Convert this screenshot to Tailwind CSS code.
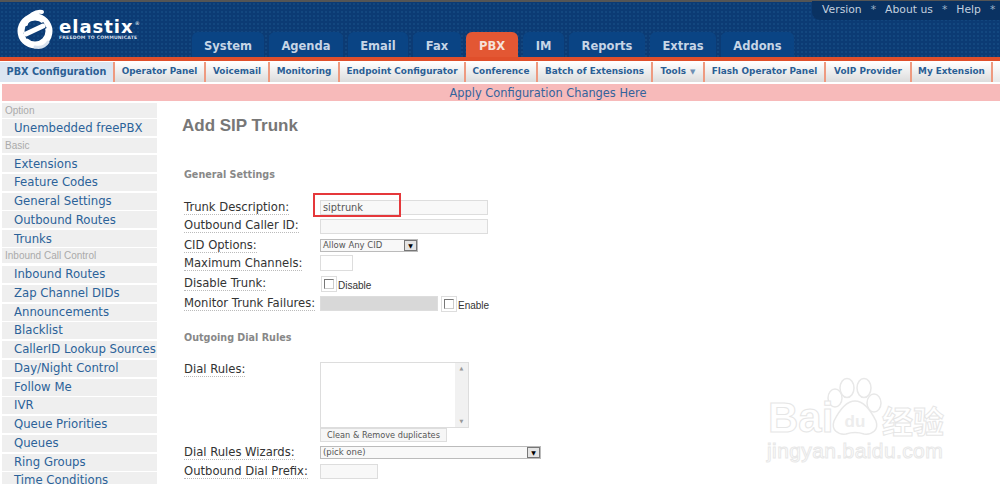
<!DOCTYPE html>
<html lang="en">
<head>
  <meta charset="UTF-8" />
  <title>Elastix - Add SIP Trunk</title>
  <script src="https://cdn.jsdelivr.net/npm/@tailwindcss/browser@4"></script>
</head>
<body class="relative h-[484px] overflow-hidden bg-white font-['DejaVu_Sans',sans-serif]">

  <!-- header -->
  <header class="relative h-[57px] border-t-2 border-[#555] bg-[#0c3b74] bg-[radial-gradient(#13477f_1px,transparent_1px)] bg-[length:4px_4px]">
    <div class="absolute left-[14px] top-[7px] flex">
      <svg width="42" height="42" viewBox="0 0 42 42" fill="none">
        <circle cx="21" cy="22" r="14" stroke="#fff" stroke-width="7"/>
        <path d="M11 27 L31 16" stroke="#0c3b74" stroke-width="7"/>
        <path d="M12 25 L29 17" stroke="#fff" stroke-width="5" stroke-linecap="round"/>
        <path d="M12 15 C14 6 22 2 28 3" stroke="#fff" stroke-width="4" stroke-linecap="round"/>
        <path d="M21 38 C26 39 31 38 34 33" stroke="#d8e2ee" stroke-width="3" stroke-linecap="round"/>
      </svg>
      <div class="ml-[3px] mt-[10px] text-white">
        <div class="flex h-[16px] items-start text-[18px] leading-[16px] font-bold tracking-[1px]">elastix<span class="ml-[1px] text-[5px] leading-[8px] font-normal">®</span></div>
        <div class="text-[4.6px] leading-[6px] font-bold tracking-[0.2px] whitespace-nowrap text-[#d5dfea]">FREEDOM TO COMMUNICATE</div>
      </div>
    </div>

    <div class="absolute -top-[1px] right-0 flex h-[19px] w-[188px] items-center rounded-bl-[8px] bg-[#0a3262] pl-[10px] text-[10.8px] text-[#c3d0df]">
      <span>Version</span><span class="mx-[9px] text-[#9fb2c8]">*</span>
      <span>About us</span><span class="mx-[9px] text-[#9fb2c8]">*</span>
      <span>Help</span><span class="ml-[9px] text-[#9fb2c8]">*</span>
    </div>

    <nav class="absolute bottom-0 left-[192px] flex h-[25px] gap-[5px] text-[11.5px] font-bold text-[#c6d5e6]">
      <a class="flex w-[72px] items-center justify-center rounded-t-[6px] bg-[#0a4484] pt-[4px]">System</a>
      <a class="flex w-[74px] items-center justify-center rounded-t-[6px] bg-[#0a4484] pt-[4px]">Agenda</a>
      <a class="flex w-[60px] items-center justify-center rounded-t-[6px] bg-[#0a4484] pt-[4px]">Email</a>
      <a class="flex w-[48px] items-center justify-center rounded-t-[6px] bg-[#0a4484] pt-[4px]">Fax</a>
      <a class="flex w-[52px] items-center justify-center rounded-t-[6px] bg-[#e35733] pt-[4px] text-[#f6e2da]">PBX</a>
      <a class="flex w-[41px] items-center justify-center rounded-t-[6px] bg-[#0a4484] pt-[4px]">IM</a>
      <a class="flex w-[76px] items-center justify-center rounded-t-[6px] bg-[#0a4484] pt-[4px]">Reports</a>
      <a class="flex w-[66px] items-center justify-center rounded-t-[6px] bg-[#0a4484] pt-[4px]">Extras</a>
      <a class="flex w-[73px] items-center justify-center rounded-t-[6px] bg-[#0a4484] pt-[4px]">Addons</a>
    </nav>
  </header>
  <div class="h-[4px] bg-[#e04f2b]"></div>

  <!-- sub menu -->
  <nav class="mt-[1px] flex h-[20px] text-[8.9px] font-bold text-[#2b5f95]">
    <a class="flex w-[115px] items-center justify-center border-r-2 border-[#ee9a80] bg-[#dce6f2] text-[9.7px]">PBX Configuration</a>
    <a class="flex w-[91px] items-center justify-center border-r-2 border-[#ee9a80] bg-gradient-to-b from-white to-[#dcdcdc]">Operator Panel</a>
    <a class="flex w-[64px] items-center justify-center border-r-2 border-[#ee9a80] bg-gradient-to-b from-white to-[#dcdcdc]">Voicemail</a>
    <a class="flex w-[70px] items-center justify-center border-r-2 border-[#ee9a80] bg-gradient-to-b from-white to-[#dcdcdc]">Monitoring</a>
    <a class="flex w-[126px] items-center justify-center border-r-2 border-[#ee9a80] bg-gradient-to-b from-white to-[#dcdcdc]">Endpoint Configurator</a>
    <a class="flex w-[72px] items-center justify-center border-r-2 border-[#ee9a80] bg-gradient-to-b from-white to-[#dcdcdc]">Conference</a>
    <a class="flex w-[115px] items-center justify-center border-r-2 border-[#ee9a80] bg-gradient-to-b from-white to-[#dcdcdc]">Batch of Extensions</a>
    <a class="flex w-[52px] items-center justify-center gap-[4px] border-r-2 border-[#ee9a80] bg-gradient-to-b from-white to-[#dcdcdc]">Tools <span class="text-[7px] text-[#6f8fb3]">▼</span></a>
    <a class="flex w-[121px] items-center justify-center border-r-2 border-[#ee9a80] bg-gradient-to-b from-white to-[#dcdcdc]">Flash Operator Panel</a>
    <a class="flex w-[86px] items-center justify-center border-r-2 border-[#ee9a80] bg-gradient-to-b from-white to-[#dcdcdc]">VoIP Provider</a>
    <a class="flex w-[81px] items-center justify-center border-r-2 border-[#ee9a80] bg-gradient-to-b from-white to-[#dcdcdc]">My Extension</a>
    <a class="flex-1 bg-gradient-to-b from-white to-[#e8e8e8]"></a>
  </nav>

  <div class="mt-[2px] ml-[2px] flex h-[17px] items-center justify-center bg-[#f7baba] pt-[2px] pl-[94px] text-[11.4px] text-[#33639c]">Apply Configuration Changes Here</div>

  <div class="mt-[2px] flex">
    <!-- side menu -->
    <aside class="ml-[2px] w-[155px] shrink-0 text-[11.7px] text-[#2b6299]">
      <div class="mb-[1px] flex h-[15px] items-center bg-[#efefef] pl-[3px] font-['Liberation_Sans',sans-serif] text-[10px] text-[#aaa]">Option</div>
      <div class="mb-[2px] flex h-[17px] items-center bg-[#efefef] pt-[2px] pl-[12px]">Unembedded freePBX</div>
      <div class="mb-[2px] flex h-[15px] items-center bg-[#efefef] pl-[3px] font-['Liberation_Sans',sans-serif] text-[10px] text-[#aaa]">Basic</div>
      <div class="mb-[1.75px] flex h-[17px] items-center bg-[#efefef] pt-[2px] pl-[12px]">Extensions</div>
      <div class="mb-[1.75px] flex h-[17px] items-center bg-[#efefef] pt-[2px] pl-[12px]">Feature Codes</div>
      <div class="mb-[1.75px] flex h-[17px] items-center bg-[#efefef] pt-[2px] pl-[12px]">General Settings</div>
      <div class="mb-[1.75px] flex h-[17px] items-center bg-[#efefef] pt-[2px] pl-[12px]">Outbound Routes</div>
      <div class="mb-[1px] flex h-[17px] items-center bg-[#efefef] pt-[2px] pl-[12px]">Trunks</div>
      <div class="mb-[3px] flex h-[15px] items-center bg-[#efefef] pl-[3px] font-['Liberation_Sans',sans-serif] text-[10px] text-[#aaa]">Inbound Call Control</div>
      <div class="mb-[1.75px] flex h-[17px] items-center bg-[#efefef] pt-[1px] pl-[12px]">Inbound Routes</div>
      <div class="mb-[1.75px] flex h-[17px] items-center bg-[#efefef] pt-[1px] pl-[12px]">Zap Channel DIDs</div>
      <div class="mb-[1.75px] flex h-[17px] items-center bg-[#efefef] pt-[1px] pl-[12px]">Announcements</div>
      <div class="mb-[1.75px] flex h-[17px] items-center bg-[#efefef] pt-[1px] pl-[12px]">Blacklist</div>
      <div class="mb-[1.75px] flex h-[17px] items-center bg-[#efefef] pt-[1px] pl-[12px] whitespace-nowrap">CallerID Lookup Sources</div>
      <div class="mb-[1.75px] flex h-[17px] items-center bg-[#efefef] pt-[1px] pl-[12px]">Day/Night Control</div>
      <div class="mb-[1.75px] flex h-[17px] items-center bg-[#efefef] pt-[1px] pl-[12px]">Follow Me</div>
      <div class="mb-[1.75px] flex h-[17px] items-center bg-[#efefef] pt-[1px] pl-[12px]">IVR</div>
      <div class="mb-[1.75px] flex h-[17px] items-center bg-[#efefef] pt-[1px] pl-[12px]">Queue Priorities</div>
      <div class="mb-[1.75px] flex h-[17px] items-center bg-[#efefef] pt-[1px] pl-[12px]">Queues</div>
      <div class="mb-[1.75px] flex h-[17px] items-center bg-[#efefef] pt-[1px] pl-[12px]">Ring Groups</div>
      <div class="mb-[1.75px] flex h-[17px] items-center bg-[#efefef] pt-[1px] pl-[12px]">Time Conditions</div>
    </aside>

    <!-- form -->
    <main class="ml-[25px] flex-1 text-[11.6px] text-[#333]">
      <h2 class="mt-[12px] h-[20px] pt-[1px] font-['Liberation_Sans',sans-serif] text-[17px] leading-[20px] font-bold text-[#777]">Add SIP Trunk</h2>

      <div class="ml-[2px]">
        <h5 class="mt-[31px] h-[16px] pt-[1px] text-[9.6px] leading-[16px] font-bold text-[#888]">General Settings</h5>

        <div class="mt-[16px] flex h-[18px] items-center">
          <label class="w-[136px] pt-[1px]"><span class="border-b border-dotted border-[#bbb]">Trunk Description:</span></label>
          <input value="siptrunk" class="h-[15px] w-[168px] border border-[#ddd] bg-[#f8f8f8] pl-[2px] text-[9.8px] text-[#555]" />
        </div>
        <div class="mt-[1px] flex h-[18px] items-center">
          <label class="w-[136px]"><span class="border-b border-dotted border-[#bbb]">Outbound Caller ID:</span></label>
          <input class="h-[15px] w-[168px] border border-[#ddd] bg-[#f8f8f8]" />
        </div>
        <div class="mt-[1px] flex h-[19px] items-center">
          <label class="w-[136px]"><span class="border-b border-dotted border-[#bbb]">CID Options:</span></label>
          <div class="flex h-[13px] w-[98px] items-center justify-between border border-[#bbb] bg-[#f8f8f8] pl-[2px] text-[8.5px] text-[#555]">Allow Any CID<span class="flex h-[11px] w-[13px] items-center justify-center border border-[#777] bg-[#e4e4e4] text-[6px] text-black">▼</span></div>
        </div>
        <div class="flex h-[16px] items-center">
          <label class="w-[136px] pt-[1px]"><span class="border-b border-dotted border-[#bbb]">Maximum Channels:</span></label>
          <input class="h-[16px] w-[33px] border border-[#ddd] bg-white" />
        </div>
        <div class="mt-[3px] flex h-[19px] items-center">
          <label class="w-[136px]"><span class="border-b border-dotted border-[#bbb]">Disable Trunk:</span></label>
          <span class="ml-[1px] flex h-[16px] w-[16px] items-center justify-center border border-[#ddd] bg-white"><span class="h-[10px] w-[10px] border border-[#777] border-r-[#ccc] border-b-[#ccc]"></span></span>
          <span class="mt-[3px] ml-[1px] font-['Liberation_Sans',sans-serif] text-[10px]">Disable</span>
        </div>
        <div class="mt-[1px] flex h-[19px] items-center">
          <label class="w-[136px] whitespace-nowrap"><span class="border-b border-dotted border-[#bbb]">Monitor Trunk Failures:</span></label>
          <div class="h-[15px] w-[118px] border border-[#ddd] bg-[#d8d8d8]"></div>
          <span class="ml-[3px] flex h-[16px] w-[16px] items-center justify-center border border-[#ddd] bg-white"><span class="h-[10px] w-[10px] border border-[#777] border-r-[#ccc] border-b-[#ccc]"></span></span>
          <span class="mt-[3px] ml-[1px] font-['Liberation_Sans',sans-serif] text-[10px]">Enable</span>
        </div>

        <h5 class="mt-[16px] h-[16px] pt-[1px] text-[9.6px] leading-[16px] font-bold text-[#888]">Outgoing Dial Rules</h5>

        <div class="mt-[17px] flex h-[80px] items-start">
          <label class="-mt-[1px] w-[136px]"><span class="border-b border-dotted border-[#bbb]">Dial Rules:</span></label>
          <div>
            <div class="flex h-[66px] w-[149px] justify-end border border-[#ddd] bg-white">
              <div class="flex w-[13px] flex-col items-center justify-between bg-[#f1f1f1] py-[2px] text-[5px] text-[#999]"><span>▲</span><span>▼</span></div>
            </div>
            <div class="flex h-[14px] w-[127px] items-center justify-center border border-[#ddd] bg-[#f6f6f6] text-[8.2px] text-[#555]">Clean &amp; Remove duplicates</div>
          </div>
        </div>
        <div class="mt-[2px] flex h-[16px] items-center">
          <label class="w-[136px] pt-[1px]"><span class="border-b border-dotted border-[#bbb]">Dial Rules Wizards:</span></label>
          <div class="flex h-[13px] w-[221px] items-center justify-between border border-[#bbb] bg-[#f8f8f8] pl-[2px] text-[8.5px] text-[#555]">(pick one)<span class="flex h-[11px] w-[13px] items-center justify-center border border-[#777] bg-[#e4e4e4] text-[6px] text-black">▼</span></div>
        </div>
        <div class="mt-[3px] flex h-[16px] items-center">
          <label class="w-[136px] pt-[1px]"><span class="border-b border-dotted border-[#bbb]">Outbound Dial Prefix:</span></label>
          <input class="h-[15px] w-[58px] border border-[#ddd] bg-[#f8f8f8]" />
        </div>
      </div>
    </main>
  </div>

  <!-- red annotation over the description field -->
  <div class="absolute top-[193px] left-[313px] h-[24px] w-[88px] border-2 border-[#e5383b]"></div>

  <!-- watermark -->
  <div class="absolute top-[375px] left-[765px] h-[95px] w-[215px] text-white">
    <svg class="absolute top-0 left-[60px]" width="60" height="62" viewBox="0 0 60 62" fill="#fff" stroke="#e8e8e8" stroke-width="1.5">
      <ellipse cx="10" cy="23" rx="7" ry="9"/>
      <ellipse cx="22" cy="13" rx="7" ry="9.5"/>
      <ellipse cx="39" cy="13" rx="7" ry="9.5"/>
      <ellipse cx="49" cy="28" rx="7" ry="9"/>
      <path d="M30 26 C40 26 47 38 51 46 C54 55 47 60 39 59 C33 57 27 57 21 59 C13 60 6 55 9 46 C13 38 20 26 30 26 Z"/>
    </svg>
    <div class="absolute top-[23px] left-[3px] font-['Liberation_Sans',sans-serif] text-[42px] leading-[40px] font-bold [-webkit-text-stroke:1px_#e6e6e6]">Bai</div>
    <div class="absolute top-[37px] left-[78px] w-[24px] text-center font-['Liberation_Sans',sans-serif] text-[17px] leading-[20px] font-bold text-[#ededed]">du</div>
    <div class="absolute top-[27px] left-[117px] font-['Noto_Sans_CJK_SC',sans-serif] text-[31px] leading-[36px] font-bold [-webkit-text-stroke:1px_#e6e6e6]">经验</div>
    <div class="absolute top-[64px] left-[2px] font-['Liberation_Sans',sans-serif] text-[21px] leading-[24px] tracking-[0.4px] whitespace-nowrap [-webkit-text-stroke:1px_#e8e8e8]">jingyan.baidu.com</div>
  </div>
</body>
</html>
